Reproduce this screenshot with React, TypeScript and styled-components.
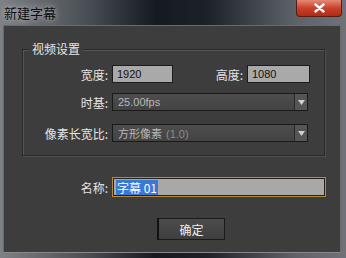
import React from "react";
import styled, { createGlobalStyle } from "styled-components";

const Global = createGlobalStyle`
  html, body { margin: 0; padding: 0; background: #3a3a3a; }
  body { font-family: "Noto Sans CJK SC", "Noto Sans", sans-serif; }
`;

const Frame = styled.div`
  width: 346px;
  height: 258px;
  display: flex;
  flex-direction: column;
  background: linear-gradient(90deg, #7d8186 0%, #4a4f55 25%, #151a20 45%, #1d2228 60%, #5d6268 85%, #6f7379 100%);
  overflow: hidden;
`;

const TitleBar = styled.div`
  height: 25px;
  position: relative;
  display: flex;
  align-items: center;
  padding-left: 4px;
  font-size: 13px;
  color: #0c0c0c;
  text-shadow: 0 0 6px rgba(255, 255, 255, 0.7);
`;

const CloseButton = styled.div`
  position: absolute;
  right: 4px;
  top: 0;
  width: 46px;
  height: 17px;
  border: 1px solid #5a1d14;
  border-top: none;
  border-radius: 0 0 4px 4px;
  background: linear-gradient(180deg, #e58a73 0%, #c9412b 50%, #b12a15 100%);
  display: flex;
  align-items: center;
  justify-content: center;
  box-sizing: border-box;
`;

const Body = styled.div`
  flex: 1;
  margin: 0 5px 5px 3px;
  background: #3d3d3d;
  border: 1px solid #6a6a6a;
  border-bottom-color: #888;
  display: flex;
  flex-direction: column;
  box-sizing: border-box;
  padding-top: 23px;
`;

const Group = styled.div`
  position: relative;
  margin-left: 18px;
  width: 303px;
  height: 107px;
  box-sizing: border-box;
  border: 1px solid #2a2a2a;
  box-shadow: inset 1px 1px 0 #555, 1px 1px 0 #4e4e4e;
  padding-top: 15px;
  display: flex;
  flex-direction: column;
`;

const Legend = styled.div`
  position: absolute;
  left: 6px;
  top: -9px;
  padding: 0 3px;
  background: #3d3d3d;
  color: #e6e6e6;
  font-size: 12px;
  line-height: 16px;
`;

const Row = styled.div<{ $top?: number }>`
  display: flex;
  align-items: center;
  height: 18px;
  margin-top: ${(p) => p.$top ?? 0}px;
`;

const Label = styled.div<{ $width: number }>`
  width: ${(p) => p.$width}px;
  text-align: right;
  color: #e4e4e4;
  font-size: 12px;
  padding-right: 4px;
  box-sizing: border-box;
  white-space: nowrap;
`;

const TextBox = styled.div<{ $width: number }>`
  width: ${(p) => p.$width}px;
  height: 18px;
  box-sizing: border-box;
  background: #a9a9a9;
  border: 1px solid #1c1c1c;
  color: #111;
  font-family: "Liberation Sans", sans-serif;
  font-size: 11px;
  padding-left: 4px;
  display: flex;
  align-items: center;
`;

const Select = styled.div`
  width: 196px;
  height: 18px;
  box-sizing: border-box;
  border: 1px solid #1a1a1a;
  background: linear-gradient(180deg, #4d4d4d, #434343);
  display: flex;
  align-items: center;
  color: #b8b8b8;
  font-size: 11px;
  padding-left: 5px;
  font-family: "Liberation Sans", "Noto Sans CJK SC", sans-serif;
`;

const SelectText = styled.span`
  flex: 1;
`;

const Muted = styled.span`
  color: #8c8c8c;
  margin-left: 4px;
`;

const Arrow = styled.div`
  width: 12px;
  height: 16px;
  border-left: 1px solid #2a2a2a;
  background: #555;
  display: flex;
  align-items: center;
  justify-content: center;
`;

const NameBox = styled.div`
  width: 214px;
  height: 20px;
  box-sizing: border-box;
  background: #a8a8a8;
  border: 1px solid #b58a3a;
  box-shadow: inset 0 0 0 1px #2a2210;
  padding-left: 3px;
  display: flex;
  align-items: center;
`;

const Selected = styled.span`
  background: #3a78d8;
  color: #fff;
  font-size: 12px;
  line-height: 15px;
  padding: 0 1px;
`;

const Button = styled.div`
  margin-left: 153px;
  margin-top: 22px;
  width: 68px;
  height: 22px;
  box-sizing: border-box;
  border: 1px solid #1a1a1a;
  border-left: 2px solid #111;
  background: linear-gradient(180deg, #4c4c4c, #3e3e3e);
  color: #f0f0f0;
  font-size: 12px;
  display: flex;
  align-items: center;
  justify-content: center;
`;

const Down = () => (
  <svg width="7" height="5" viewBox="0 0 7 5">
    <path d="M0 0h7L3.5 5z" fill="#d0d0d0" />
  </svg>
);

export default function App() {
  return (
    <>
      <Global />
      <Frame>
        <TitleBar>
          新建字幕
          <CloseButton>
            <svg width="11" height="10" viewBox="0 0 11 10">
              <path d="M1.5 1.5l8 7M9.5 1.5l-8 7" stroke="#fff" strokeWidth="2.4" strokeLinecap="round" />
            </svg>
          </CloseButton>
        </TitleBar>
        <Body>
          <Group>
            <Legend>视频设置</Legend>
            <Row>
              <Label $width={89}>宽度:</Label>
              <TextBox $width={61}>1920</TextBox>
              <Label $width={74}>高度:</Label>
              <TextBox $width={63}>1080</TextBox>
            </Row>
            <Row $top={10}>
              <Label $width={89}>时基:</Label>
              <Select>
                <SelectText>25.00fps</SelectText>
                <Arrow>
                  <Down />
                </Arrow>
              </Select>
            </Row>
            <Row $top={13}>
              <Label $width={89}>像素长宽比:</Label>
              <Select>
                <SelectText>
                  方形像素<Muted>(1.0)</Muted>
                </SelectText>
                <Arrow>
                  <Down />
                </Arrow>
              </Select>
            </Row>
          </Group>
          <Row $top={22}>
            <Label $width={108}>名称:</Label>
            <NameBox>
              <Selected>字幕 01</Selected>
            </NameBox>
          </Row>
          <Button>确定</Button>
        </Body>
      </Frame>
    </>
  );
}
